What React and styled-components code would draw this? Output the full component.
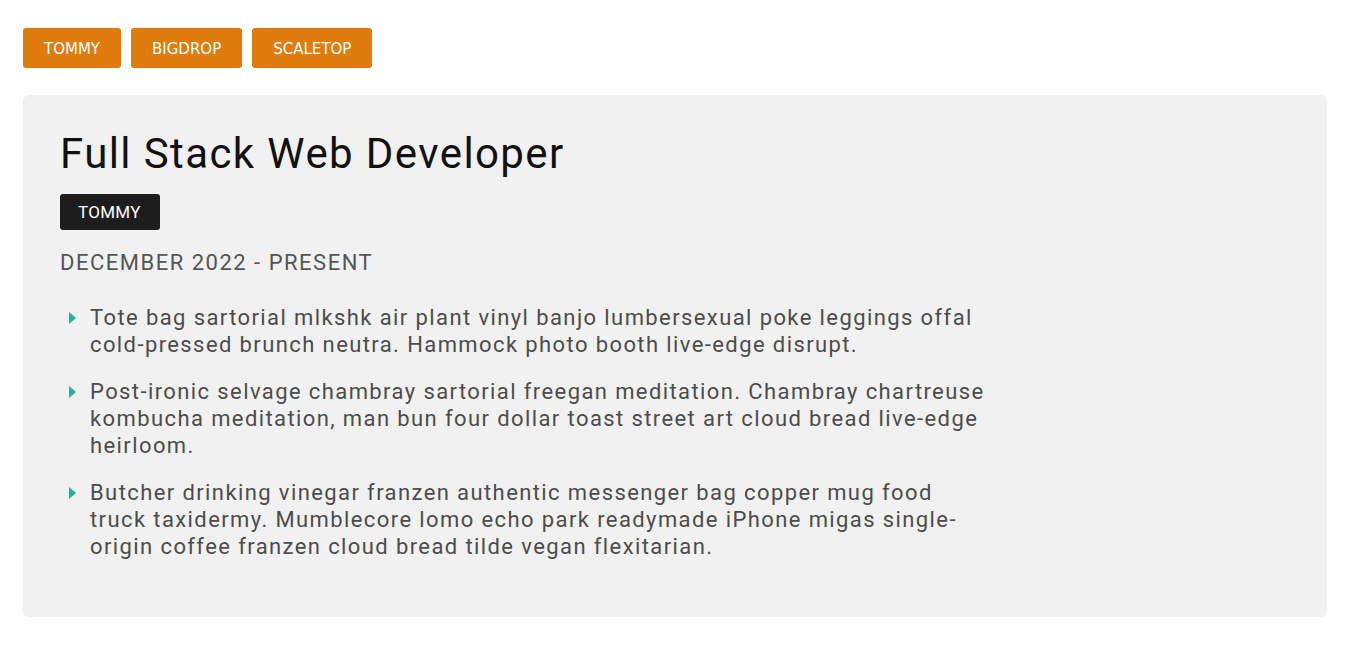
import styled, { createGlobalStyle } from 'styled-components'

const GlobalStyle = createGlobalStyle`
  body {
    margin: 0;
    background: #ffffff;
    font-family: Roboto, 'Noto Sans', sans-serif;
  }
`

const Page = styled.div`
  padding: 28px 23px;
  display: flex;
  flex-direction: column;
  gap: 27px;
`

const Tabs = styled.div`
  display: flex;
  gap: 10px;
`

const TabButton = styled.button`
  height: 40px;
  padding: 2px 21px 0;
  border: none;
  border-radius: 3px;
  background: #e07b0d;
  color: #ffffff;
  font-family: 'DejaVu Sans', Verdana, sans-serif;
  font-size: 15px;
  cursor: pointer;
`

const Card = styled.div`
  background: #f1f1f1;
  border-radius: 6px;
  padding: 32px 37px 57px;
`

const Title = styled.h2`
  margin: 0;
  font-family: Roboto, sans-serif;
  font-weight: 400;
  font-size: 42px;
  letter-spacing: 1.4px;
  line-height: 54px;
  color: #111111;
`

const Company = styled.span`
  display: inline-block;
  margin-top: 13px;
  padding: 0 19px 0 18px;
  height: 36px;
  line-height: 36px;
  background: #1d1d1d;
  color: #ffffff;
  border-radius: 3px;
  font-size: 17px;
  letter-spacing: 0.3px;
`

const Period = styled.div`
  margin-top: 19px;
  font-size: 22px;
  line-height: 28px;
  letter-spacing: 1.5px;
  color: #555555;
`

const List = styled.ul`
  list-style: none;
  margin: 27px 0 0;
  padding: 0 0 0 30px;
  max-width: 900px;
  display: flex;
  flex-direction: column;
  gap: 20px;
`

const Item = styled.li`
  position: relative;
  font-size: 22px;
  line-height: 27px;
  letter-spacing: 1.4px;
  color: #4c4c4c;

  &::before {
    content: '';
    position: absolute;
    left: -21px;
    top: 8px;
    border-style: solid;
    border-width: 6px 0 6px 7px;
    border-color: transparent transparent transparent #17b994;
  }
`

const duties = [
  'Tote bag sartorial mlkshk air plant vinyl banjo lumbersexual poke leggings offal cold-pressed brunch neutra. Hammock photo booth live-edge disrupt.',
  'Post-ironic selvage chambray sartorial freegan meditation. Chambray chartreuse kombucha meditation, man bun four dollar toast street art cloud bread live-edge heirloom.',
  'Butcher drinking vinegar franzen authentic messenger bag copper mug food truck taxidermy. Mumblecore lomo echo park readymade iPhone migas single-origin coffee franzen cloud bread tilde vegan flexitarian.',
]

const App = () => {
  return (
    <>
      <GlobalStyle />
      <Page>
        <Tabs>
          <TabButton>TOMMY</TabButton>
          <TabButton>BIGDROP</TabButton>
          <TabButton>SCALETOP</TabButton>
        </Tabs>
        <Card>
          <Title>Full Stack Web Developer</Title>
          <Company>TOMMY</Company>
          <Period>DECEMBER 2022 - PRESENT</Period>
          <List>
            {duties.map((d) => (
              <Item key={d.slice(0, 10)}>{d}</Item>
            ))}
          </List>
        </Card>
      </Page>
    </>
  )
}

export default App
